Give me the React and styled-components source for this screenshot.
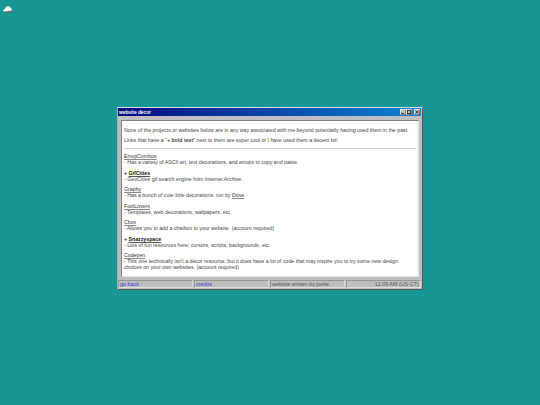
import styled, { createGlobalStyle } from "styled-components";

const GlobalStyle = createGlobalStyle`
  html, body {
    margin: 0;
    padding: 0;
    background: #189696;
  }
  body {
    font-family: "Liberation Sans", Arial, sans-serif;
    font-size: 5.24px;
    color: #444;
  }
`;

const Desktop = styled.div`
  position: relative;
  width: 540px;
  height: 405px;
  overflow: hidden;
  background: #189696;
`;

const Pet = styled.svg`
  position: absolute;
  left: 2px;
  top: 5px;
`;

const Window = styled.div`
  position: absolute;
  left: 117px;
  top: 107px;
  width: 306px;
  height: 183px;
  box-sizing: border-box;
  display: flex;
  flex-direction: column;
  padding: 0 0 1px;
  background: #bfbfbf;
  border-top: 1px solid #dcdcdc;
  border-left: 1px solid #9fb8b8;
  border-right: 1px solid #555;
  border-bottom: 1px solid #555;
`;

const TitleBar = styled.div`
  height: 8px;
  flex: none;
  display: flex;
  align-items: center;
  justify-content: space-between;
  padding: 0 0 0 1px;
  margin-right: 1px;
  background: linear-gradient(90deg, #000a80, #1084d0);
`;

const Title = styled.span`
  color: #fff;
  font-weight: bold;
  font-size: 4.8px;
`;

const Controls = styled.div`
  display: flex;
  padding-right: 1px;
`;

const Control = styled.div`
  width: 6px;
  height: 6px;
  margin-left: ${(p) => (p.$gap ? "2px" : "0")};
  box-sizing: border-box;
  display: flex;
  align-items: center;
  justify-content: center;
  background: #c0c0c0;
  box-shadow: inset 0.5px 0.5px 0 #fff, inset -0.5px -0.5px 0 #444;
`;

const Body = styled.div`
  flex: 1;
  display: flex;
  margin: 4px 3px 3px 3px;
  border-top: 1px solid #808080;
  border-left: 1px solid #808080;
  border-right: 1px solid #e4e4e4;
  border-bottom: 1px solid #e4e4e4;
`;

const Content = styled.div`
  flex: 1;
  background: #fff;
  padding: 6px 2px 0 2px;
  line-height: 6px;
  white-space: nowrap;
`;

const Intro = styled.p`
  margin: 0 0 4px;
`;

const Rule = styled.hr`
  margin: 4.5px 0 4.8px;
  height: 1px;
  border: 0;
  background: #c8c8c8;
`;

const Entry = styled.div`
  margin-bottom: 4px;
`;

const Name = styled.a`
  text-decoration: underline;
  text-decoration-color: ${(p) => (p.$bold ? "#555" : "#8a8a8a")};
  text-decoration-thickness: 1px;
  text-underline-offset: 0.5px;
  font-weight: ${(p) => (p.$bold ? "bold" : "normal")};
  color: ${(p) => (p.$bold ? "#111" : "#333")};
`;

const Plus = styled.b`
  color: #111;
`;

const Line = styled.div`
  line-height: ${(p) => (p.$head ? "6.8px" : "5.7px")};
`;

const StatusBar = styled.div`
  flex: none;
  height: 8px;
  margin-right: 1px;
  display: grid;
  grid-template-columns: repeat(4, 1fr);
  gap: 1px;
`;

const Cell = styled.div`
  display: flex;
  align-items: center;
  justify-content: ${(p) => p.$align || "flex-start"};
  padding: 0 1px;
  overflow: hidden;
  white-space: nowrap;
  font-size: 5.4px;
  color: #555;
  border-top: 1px solid #969696;
  border-left: 1px solid #969696;
  border-right: 1px solid #dedede;
  border-bottom: 1px solid #dedede;
`;

const StatusLink = styled.a`
  color: #3a3ad0;
  text-decoration: underline;
  text-decoration-color: #6a6ae0;
  text-decoration-thickness: 1px;
  text-underline-offset: 0.5px;
`;

const entries = [
  { name: "EmojiCombos", lines: ["- Has a variety of ASCII art, text decorations, and emojis to copy and paste."] },
  { name: "GifCities", hot: true, lines: ["- GeoCities gif search engine from Internet Archive."] },
  {
    name: "Graphy",
    lines: [
      <>
        - Has a bunch of cute little decorations, run by <Name>Dove</Name>.
      </>,
    ],
  },
  { name: "FoolLovers", lines: ["- Templates, web decorations, wallpapers, etc."] },
  { name: "Cbox", lines: ["- Allows you to add a chatbox to your website. (account required)"] },
  { name: "Snazzyspace", hot: true, lines: ["- Lots of fun resources here; cursors, scripts, backgrounds, etc."] },
  {
    name: "Codepen",
    lines: [
      "- This one technically isn't a décor resource, but it does have a lot of code that may inspire you to try some new design",
      "choices on your own websites. (account required)",
    ],
  },
];

const App = () => {
  return (
    <Desktop>
      <GlobalStyle />
      <Pet width="12" height="9" viewBox="0 0 12 9">
        <path d="M1.2 5.5 Q1.5 4 3 4 Q3.5 1.5 5.5 1.2 Q8 0.8 8.8 3 Q10 3.6 10 6 L2.5 6.8 Q1.2 6.8 1.2 5.5 Z" fill="#fff" />
        <path d="M2 6.8 L6 6.2 L10 5.6 L10.8 7.5 L9 8 L4 8 Z" fill="#5d6e78" />
      </Pet>
      <Window>
        <TitleBar>
          <Title>website décor</Title>
          <Controls>
            <Control>
              <svg width="4" height="4" viewBox="0 0 4 4">
                <rect x="0" y="2.8" width="2.6" height="1" fill="#222" />
              </svg>
            </Control>
            <Control>
              <svg width="4" height="4" viewBox="0 0 4 4">
                <rect x="0.4" y="0.4" width="3.2" height="3.2" fill="none" stroke="#222" strokeWidth="0.8" />
              </svg>
            </Control>
            <Control $gap>
              <svg width="4" height="4" viewBox="0 0 4 4">
                <path d="M0.4 0.4 L3.6 3.6 M3.6 0.4 L0.4 3.6" stroke="#222" strokeWidth="0.8" />
              </svg>
            </Control>
          </Controls>
        </TitleBar>
        <Body>
          <Content>
            <Intro>None of the projects or websites below are in any way associated with me beyond potentially having used them in the past.</Intro>
            <Intro>
              Links that have a "<b>+ bold text</b>" next to them are super cool or I have used them a decent bit!
            </Intro>
            <Rule />
            {entries.map((entry) => (
              <Entry key={entry.name}>
                <Line $head>
                  {entry.hot && <Plus>+ </Plus>}
                  <Name $bold={entry.hot}>{entry.name}</Name>
                </Line>
                {entry.lines.map((line, i) => (
                  <Line key={i}>{line}</Line>
                ))}
              </Entry>
            ))}
          </Content>
        </Body>
        <StatusBar>
          <Cell>
            <StatusLink>go back</StatusLink>
          </Cell>
          <Cell>
            <StatusLink>credits</StatusLink>
          </Cell>
          <Cell>website written by joelle</Cell>
          <Cell $align="flex-end">12:09 AM (US-CT)</Cell>
        </StatusBar>
      </Window>
    </Desktop>
  );
};

export default App;
